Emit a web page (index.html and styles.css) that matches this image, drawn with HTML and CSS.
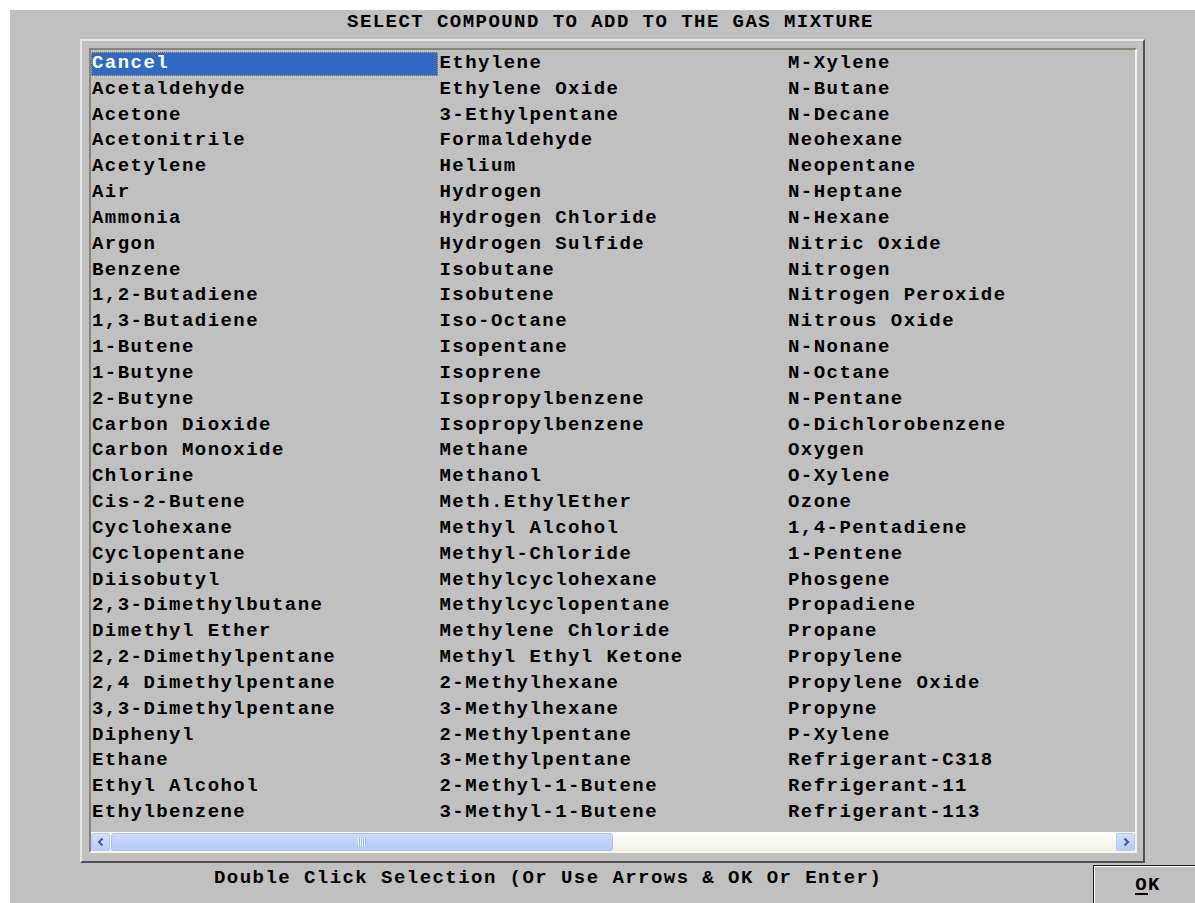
FILE: index.html
```html
<!DOCTYPE html>
<html lang="en">
<head>
<meta charset="utf-8">
<title>Select Compound</title>
<link rel="stylesheet" href="styles.css">
</head>
<body>
<div class="panel">
  <div class="title">SELECT COMPOUND TO ADD TO THE GAS MIXTURE</div>
  <div class="frame">
    <div class="listbox">
      <div class="items">
        <div class="item selected">Cancel</div>
        <div class="item">Acetaldehyde</div>
        <div class="item">Acetone</div>
        <div class="item">Acetonitrile</div>
        <div class="item">Acetylene</div>
        <div class="item">Air</div>
        <div class="item">Ammonia</div>
        <div class="item">Argon</div>
        <div class="item">Benzene</div>
        <div class="item">1,2-Butadiene</div>
        <div class="item">1,3-Butadiene</div>
        <div class="item">1-Butene</div>
        <div class="item">1-Butyne</div>
        <div class="item">2-Butyne</div>
        <div class="item">Carbon Dioxide</div>
        <div class="item">Carbon Monoxide</div>
        <div class="item">Chlorine</div>
        <div class="item">Cis-2-Butene</div>
        <div class="item">Cyclohexane</div>
        <div class="item">Cyclopentane</div>
        <div class="item">Diisobutyl</div>
        <div class="item">2,3-Dimethylbutane</div>
        <div class="item">Dimethyl Ether</div>
        <div class="item">2,2-Dimethylpentane</div>
        <div class="item">2,4 Dimethylpentane</div>
        <div class="item">3,3-Dimethylpentane</div>
        <div class="item">Diphenyl</div>
        <div class="item">Ethane</div>
        <div class="item">Ethyl Alcohol</div>
        <div class="item">Ethylbenzene</div>

        <div class="item">Ethylene</div>
        <div class="item">Ethylene Oxide</div>
        <div class="item">3-Ethylpentane</div>
        <div class="item">Formaldehyde</div>
        <div class="item">Helium</div>
        <div class="item">Hydrogen</div>
        <div class="item">Hydrogen Chloride</div>
        <div class="item">Hydrogen Sulfide</div>
        <div class="item">Isobutane</div>
        <div class="item">Isobutene</div>
        <div class="item">Iso-Octane</div>
        <div class="item">Isopentane</div>
        <div class="item">Isoprene</div>
        <div class="item">Isopropylbenzene</div>
        <div class="item">Isopropylbenzene</div>
        <div class="item">Methane</div>
        <div class="item">Methanol</div>
        <div class="item">Meth.EthylEther</div>
        <div class="item">Methyl Alcohol</div>
        <div class="item">Methyl-Chloride</div>
        <div class="item">Methylcyclohexane</div>
        <div class="item">Methylcyclopentane</div>
        <div class="item">Methylene Chloride</div>
        <div class="item">Methyl Ethyl Ketone</div>
        <div class="item">2-Methylhexane</div>
        <div class="item">3-Methylhexane</div>
        <div class="item">2-Methylpentane</div>
        <div class="item">3-Methylpentane</div>
        <div class="item">2-Methyl-1-Butene</div>
        <div class="item">3-Methyl-1-Butene</div>

        <div class="item">M-Xylene</div>
        <div class="item">N-Butane</div>
        <div class="item">N-Decane</div>
        <div class="item">Neohexane</div>
        <div class="item">Neopentane</div>
        <div class="item">N-Heptane</div>
        <div class="item">N-Hexane</div>
        <div class="item">Nitric Oxide</div>
        <div class="item">Nitrogen</div>
        <div class="item">Nitrogen Peroxide</div>
        <div class="item">Nitrous Oxide</div>
        <div class="item">N-Nonane</div>
        <div class="item">N-Octane</div>
        <div class="item">N-Pentane</div>
        <div class="item">O-Dichlorobenzene</div>
        <div class="item">Oxygen</div>
        <div class="item">O-Xylene</div>
        <div class="item">Ozone</div>
        <div class="item">1,4-Pentadiene</div>
        <div class="item">1-Pentene</div>
        <div class="item">Phosgene</div>
        <div class="item">Propadiene</div>
        <div class="item">Propane</div>
        <div class="item">Propylene</div>
        <div class="item">Propylene Oxide</div>
        <div class="item">Propyne</div>
        <div class="item">P-Xylene</div>
        <div class="item">Refrigerant-C318</div>
        <div class="item">Refrigerant-11</div>
        <div class="item">Refrigerant-113</div>
      </div>
      <div class="hscroll">
        <div class="sbtn">
          <svg width="10" height="10" viewBox="0 0 10 10"><path d="M6.5 1.5 L3 5 L6.5 8.5" fill="none" stroke="#4d6185" stroke-width="2.2"/></svg>
        </div>
        <div class="track">
          <div class="thumb"><span class="grip"></span></div>
        </div>
        <div class="sbtn">
          <svg width="10" height="10" viewBox="0 0 10 10"><path d="M3.5 1.5 L7 5 L3.5 8.5" fill="none" stroke="#4d6185" stroke-width="2.2"/></svg>
        </div>
      </div>
    </div>
  </div>
  <div class="footer">
    <div class="hint">Double Click Selection (Or Use Arrows &amp; OK Or Enter)</div>
    <button class="ok" type="button"><u>O</u>K</button>
  </div>
</div>
</body>
</html>
```

FILE: styles.css
```css
html, body {
  margin: 0;
  padding: 0;
  background: #ffffff;
}

body {
  padding: 10px 0 0 10px;
  font-family: "Liberation Mono", "DejaVu Sans Mono", monospace;
  font-weight: bold;
  font-size: 19px;
  letter-spacing: 1.45px;
  color: #000;
}

.panel {
  width: 1185px;
  height: 893px;
  background: #c0c0c0;
  overflow: hidden;
}

.title {
  margin-left: 68px;
  width: 1065px;
  height: 29px;
  line-height: 24px;
  text-align: center;
  white-space: pre;
}

/* group frame: light top/left, dark bottom/right */
.frame {
  box-sizing: border-box;
  margin-left: 70px;
  width: 1065px;
  height: 824px;
  padding: 7px 6px 8px 7px;
  border-style: solid;
  border-width: 2px;
  border-color: #e6e6e6 #505050 #505050 #e6e6e6;
}

/* sunken list box */
.listbox {
  box-sizing: border-box;
  height: 805px;
  border-style: solid;
  border-width: 2px;
  border-color: #85857a #f6f6ee #f6f6ee #85857a;
  display: flex;
  flex-direction: column;
}

.items {
  padding-top: 1px;
  height: 774.9px;
  display: grid;
  grid-template-columns: 347.5px 348.5px 348px;
  grid-template-rows: repeat(30, 25.83px);
  grid-auto-flow: column;
}

.item {
  padding-left: 1px;
  line-height: 25.83px;
  white-space: pre;
  margin-right: 1px;
}

.item.selected {
  background: #316ac5;
  color: #ffffff;
  outline: 1px dotted #d4a050;
  outline-offset: -1px;
  margin-top: 1px;
  margin-bottom: 1px;
  line-height: 23.83px;
}

/* horizontal scroll bar */
.hscroll {
  margin-top: auto;
  height: 19px;
  display: flex;
  background: linear-gradient(#fefefb, #f2f1e8);
  box-shadow: inset 0 -1px 0 #e9e8df;
}

.sbtn {
  box-sizing: border-box;
  width: 19px;
  height: 18px;
  margin-top: 1px;
  border: 1px solid #b5c8f4;
  border-radius: 2px;
  background: linear-gradient(#d2dffc, #b9cdfa);
  display: flex;
  align-items: center;
  justify-content: center;
}

.track {
  flex: 1;
  display: flex;
  padding: 1px 1px 0 1px;
}

.thumb {
  box-sizing: border-box;
  width: 502px;
  height: 18px;
  border: 1px solid #a9c0f1;
  border-radius: 3px;
  background: linear-gradient(#cddcfd, #bccffb 60%, #b6cafa);
  display: flex;
  align-items: center;
  justify-content: center;
}

.grip {
  width: 8px;
  height: 8px;
  background: repeating-linear-gradient(90deg, #f4f7ff 0 1px, #9db6ee 1px 2px);
}

.footer {
  display: grid;
  grid-template-columns: 1083px 110px;
}

.hint {
  padding-left: 204px;
  padding-top: 5px;
  line-height: 20px;
  white-space: pre;
}

.ok {
  box-sizing: border-box;
  margin: 2px 0 0 0;
  width: 110px;
  height: 40px;
  padding: 0;
  font: inherit;
  letter-spacing: inherit;
  color: #000;
  background: #c0c0c0;
  border: 1px solid #1c1c1c;
  box-shadow: inset 1px 1px 0 #ffffff;
  text-align: center;
}

.ok u {
  text-decoration-thickness: 2px;
  text-underline-offset: 3px;
}
```
